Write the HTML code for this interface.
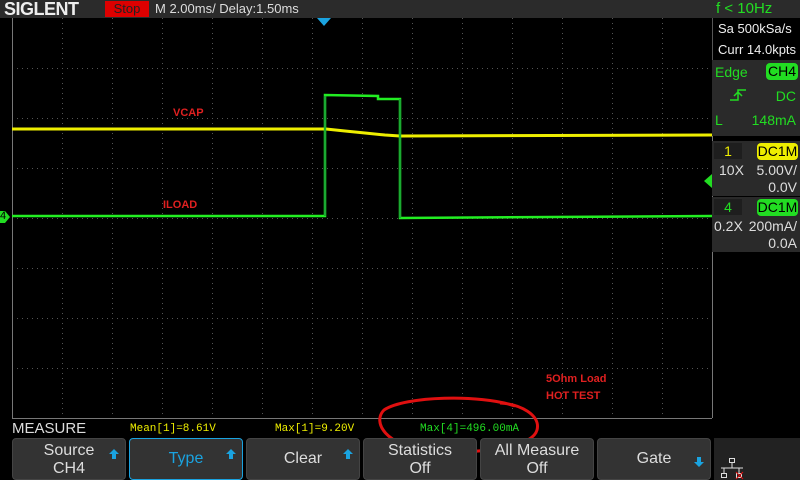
<!DOCTYPE html>
<html><head><meta charset="utf-8"><style>
body{margin:0;width:800px;height:480px;background:#000;overflow:hidden;position:relative;font-family:"Liberation Sans",sans-serif}
.a{position:absolute;white-space:nowrap}
.top{left:0;top:0;width:800px;height:18px;background:#2b2b2b}
.btn{position:absolute;top:438px;height:42px;background:#333;border:1px solid #444;border-radius:4px;box-sizing:border-box;color:#ddd;font-size:16px;text-align:center;line-height:18px}
.arr{position:absolute;right:5px;top:9px}
.mono{font-family:"Liberation Mono",monospace;font-size:11px}
.panel{position:absolute;left:712px;width:88px;background:#2a2a2a;color:#ddd;font-size:14px;white-space:nowrap}
</style></head><body>
<div class="a top"></div>
<div class="a" style="left:4px;top:0;font:bold 18px 'Liberation Sans',sans-serif;color:#eee;letter-spacing:-0.5px;line-height:18px">SIGLENT</div>
<div class="a" style="left:105px;top:1px;width:44px;height:16px;background:#d00;color:#222;font-size:13px;line-height:16px;text-align:center">Stop</div>
<div class="a" style="left:155px;top:1px;color:#ddd;font-size:13px;line-height:16px">M 2.00ms/ Delay:1.50ms</div>
<div class="a" style="left:716px;top:0px;color:#2d2;font-size:15px;line-height:18px">f &lt; 10Hz</div>

<svg class="a" style="left:0;top:0" width="800" height="480">
<g stroke="#555" stroke-width="1" stroke-dasharray="1,4">
<line x1="62.5" y1="18" x2="62.5" y2="418"/><line x1="112.5" y1="18" x2="112.5" y2="418"/><line x1="162.5" y1="18" x2="162.5" y2="418"/><line x1="212.5" y1="18" x2="212.5" y2="418"/><line x1="262.5" y1="18" x2="262.5" y2="418"/><line x1="312.5" y1="18" x2="312.5" y2="418"/><line x1="362.5" y1="18" x2="362.5" y2="418"/><line x1="412.5" y1="18" x2="412.5" y2="418"/><line x1="462.5" y1="18" x2="462.5" y2="418"/><line x1="512.5" y1="18" x2="512.5" y2="418"/><line x1="562.5" y1="18" x2="562.5" y2="418"/><line x1="612.5" y1="18" x2="612.5" y2="418"/><line x1="662.5" y1="18" x2="662.5" y2="418"/>
<line x1="12" y1="68.5" x2="712" y2="68.5"/><line x1="12" y1="118.5" x2="712" y2="118.5"/><line x1="12" y1="168.5" x2="712" y2="168.5"/><line x1="12" y1="218.5" x2="712" y2="218.5"/><line x1="12" y1="268.5" x2="712" y2="268.5"/><line x1="12" y1="318.5" x2="712" y2="318.5"/><line x1="12" y1="368.5" x2="712" y2="368.5"/>
</g>
<line x1="12.5" y1="18" x2="12.5" y2="418" stroke="#777"/>
<line x1="712.5" y1="18" x2="712.5" y2="418" stroke="#777"/>
<line x1="12" y1="418.5" x2="712" y2="418.5" stroke="#777"/>
<polygon points="317,18 331,18 324,26" fill="#1aa3e0"/>
<polygon points="0,211 5,211 10,217 5,223 0,223" fill="#2d2"/>
<polygon points="712,174 704,181 712,188" fill="#2d2"/>
<polyline points="12,129 326,129 345,131 365,133 385,135 400,136 712,135" fill="none" stroke="#ee0" stroke-width="3"/>
<polyline points="12,216 325,216 325,95 378,96 378,99 400,99 400,218 712,216" fill="none" stroke="#2e2" stroke-width="2.5"/>
<line x1="325" y1="96" x2="325" y2="216" stroke="#164" stroke-width="1"/>
<line x1="400" y1="99" x2="400" y2="218" stroke="#164" stroke-width="1"/>
<path d="M515,406 C480,394 405,396 384,410 C372,422 385,446 430,451 C480,454 532,448 537,430 C541,415 520,404 500,403" fill="none" stroke="#e01010" stroke-width="3"/>
</svg>
<div class="a" style="left:0;top:209px;color:#000;font-size:11px;line-height:14px">4</div>
<div class="a" style="left:173px;top:107px;color:#e02020;font-size:11px;font-weight:bold">VCAP</div>
<div class="a" style="left:163px;top:199px;color:#e02020;font-size:11px;font-weight:bold">ILOAD</div>
<div class="a" style="left:546px;top:371px;color:#e02020;font-size:11px;font-weight:bold;line-height:17px">5Ohm Load<br>HOT TEST</div>

<div class="panel" style="top:18px;height:42px;background:#000;border-left:1px solid #555;color:#eee;padding-left:5px;box-sizing:border-box;line-height:21px;font-size:13px">Sa 500kSa/s<br>Curr 14.0kpts</div>
<div class="panel" style="top:60px;height:76px;color:#2d2">
<div class="a" style="left:3px;top:4px">Edge</div>
<div class="a" style="left:54px;top:3px;width:32px;height:17px;background:#2d2;color:#000;border-radius:4px;text-align:center;line-height:17px">CH4</div>
<svg class="a" style="left:16px;top:28px" width="20" height="14"><path d="M2,12 H10 V2 H18 M6,8 L10,4 L14,8" fill="none" stroke="#2d2" stroke-width="1.5"/></svg>
<div class="a" style="right:4px;top:28px">DC</div>
<div class="a" style="left:3px;top:52px">L</div>
<div class="a" style="right:4px;top:52px">148mA</div>
</div>
<div class="panel" style="top:141px;height:55px">
<div class="a" style="left:2px;top:2px;width:28px;height:16px;background:#1e1e1e;color:#ee0;text-align:center">1</div>
<div class="a" style="left:45px;top:2px;width:41px;height:17px;background:#ee0;color:#000;border-radius:4px;text-align:center">DC1M</div>
<div class="a" style="left:7px;top:21px">10X</div>
<div class="a" style="right:3px;top:21px">5.00V/</div>
<div class="a" style="right:3px;top:38px">0.0V</div>
</div>
<div class="panel" style="top:197px;height:55px">
<div class="a" style="left:2px;top:2px;width:28px;height:16px;background:#1e1e1e;color:#2d2;text-align:center">4</div>
<div class="a" style="left:45px;top:2px;width:41px;height:17px;background:#2d2;color:#000;border-radius:4px;text-align:center">DC1M</div>
<div class="a" style="left:2px;top:21px">0.2X</div>
<div class="a" style="right:3px;top:21px">200mA/</div>
<div class="a" style="right:3px;top:38px">0.0A</div>
</div>

<div class="a" style="left:12px;top:420px;color:#ddd;font-size:15px">MEASURE</div>
<div class="a mono" style="left:130px;top:423px;color:#ee0">Mean[1]=8.61V</div>
<div class="a mono" style="left:275px;top:423px;color:#ee0">Max[1]=9.20V</div>
<div class="a mono" style="left:420px;top:423px;color:#2d2">Max[4]=496.00mA</div>

<div class="btn" style="left:12px;width:114px;padding-top:3px">Source<br>CH4<svg class="arr" width="12" height="12"><path d="M1,6 L6,1 L11,6 Z M4,6 H8 V11 H4Z" fill="#1aa3e0"/></svg></div>
<div class="btn" style="left:129px;width:114px;border-color:#1aa3e0;color:#1aa3e0;line-height:40px">Type<svg class="arr" width="12" height="12"><path d="M1,6 L6,1 L11,6 Z M4,6 H8 V11 H4Z" fill="#1aa3e0"/></svg></div>
<div class="btn" style="left:246px;width:114px;line-height:40px">Clear<svg class="arr" width="12" height="12"><path d="M1,6 L6,1 L11,6 Z M4,6 H8 V11 H4Z" fill="#1aa3e0"/></svg></div>
<div class="btn" style="left:363px;width:114px;padding-top:3px">Statistics<br>Off</div>
<div class="btn" style="left:480px;width:114px;padding-top:3px">All Measure<br>Off</div>
<div class="btn" style="left:597px;width:114px;line-height:40px">Gate<svg class="arr" style="top:17px" width="12" height="12"><path d="M1,6 L6,11 L11,6 Z M4,6 H8 V1 H4Z" fill="#1aa3e0"/></svg></div>
<div class="a" style="left:714px;top:438px;width:86px;height:42px;background:#222"></div>
<svg class="a" style="left:720px;top:458px" width="26" height="22"><g fill="none" stroke="#ddd"><rect x="9.5" y="0.5" width="5" height="4"/><rect x="1.5" y="15.5" width="5" height="4"/><rect x="16.5" y="15.5" width="5" height="4"/><path d="M12 5V10M1 10H23M4 10V15M19 10V15"/></g><path d="M16 14L23 21M23 14L16 21" stroke="#e01010"/></svg>
</body></html>
